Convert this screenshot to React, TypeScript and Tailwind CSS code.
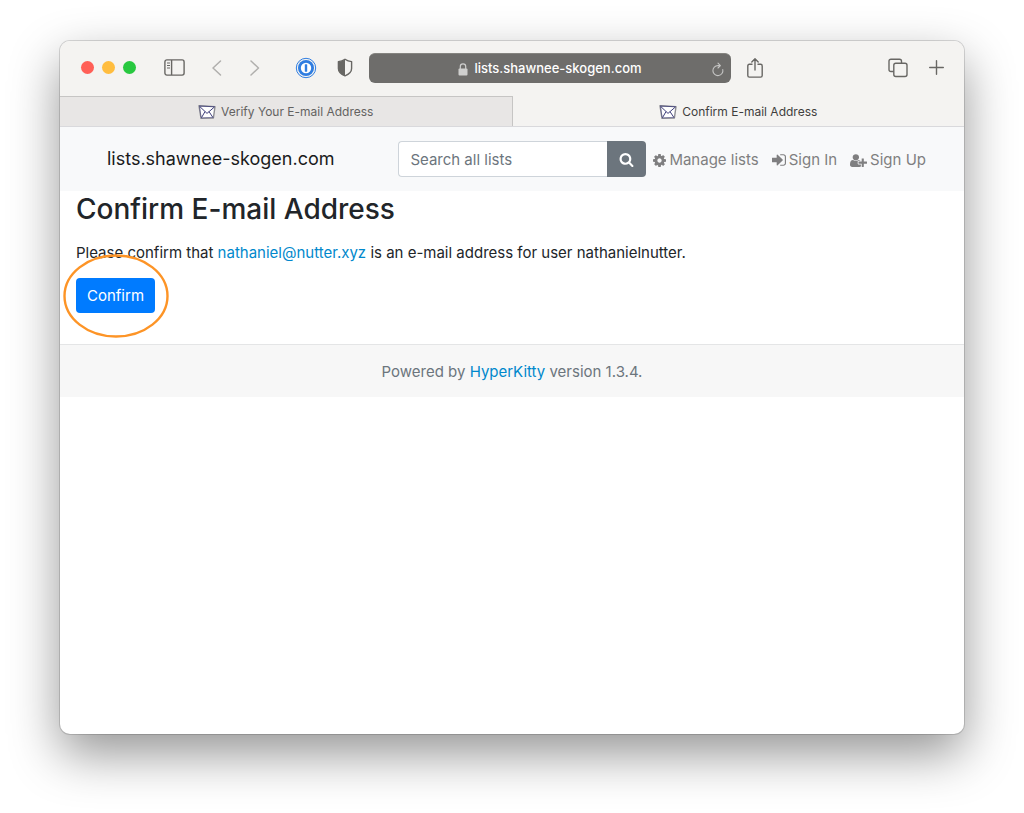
import type { ReactNode } from "react";

const glyphs = {
  cog: "M1152 896q0-106-75-181t-181-75-181 75-75 181 75 181 181 75 181-75 75-181zm512-109v222q0 12-8 23t-20 13l-185 28q-19 54-39 91 35 50 107 138 10 12 10 25t-9 23q-27 37-99 108t-94 71q-12 0-26-9l-138-108q-44 23-91 38-16 136-29 186-7 28-36 28h-222q-14 0-24.5-8.5t-11.5-21.5l-28-184q-49-16-90-37l-141 107q-10 9-25 9-14 0-25-11-126-114-165-168-7-10-7-23 0-12 8-23 15-21 51-66.5t54-70.5q-27-50-41-99l-183-27q-13-2-21-12.5t-8-23.5v-222q0-12 8-23t19-13l186-28q14-46 39-92-40-57-107-138-10-12-10-24 0-10 9-23 26-36 98.5-107.5t94.5-71.5q13 0 26 10l138 107q44-23 91-38 16-136 29-186 7-28 36-28h222q14 0 24.5 8.5t11.5 21.5l28 184q49 16 90 37l142-107q9-9 24-9 13 0 25 10 129 119 165 170 7 8 7 22 0 12-8 23-15 21-51 66.5t-54 70.5q26 50 41 98l183 28q13 2 21 12.5t8 23.5z",
  signIn:
    "M1184 896q0 26-19 45l-544 544q-19 19-45 19t-45-19-19-45v-288h-448q-26 0-45-19t-19-45v-384q0-26 19-45t45-19h448v-288q0-26 19-45t45-19 45 19l544 544q19 19 19 45zm352-352v704q0 119-84.5 203.5t-203.5 84.5h-320q-13 0-22.5-9.5t-9.5-22.5q-1-4-1-20t-.5-26.5 3-23.5 10-19.5 20.5-6.5h320q66 0 113-47t47-113v-704q0-66-47-113t-113-47h-312l-11.5-1-11.5-3-8-5.5-7-9-2-13.5q-1-4-1-20t-.5-26.5 3-23.5 10-19.5 20.5-6.5h320q119 0 203.5 84.5t84.5 203.5z",
  userPlus:
    "M704 896q-159 0-271.5-112.5t-112.5-271.5 112.5-271.5 271.5-112.5 271.5 112.5 112.5 271.5-112.5 271.5-271.5 112.5zm960 128h352q13 0 22.5 9.5t9.5 22.5v192q0 13-9.5 22.5t-22.5 9.5h-352v352q0 13-9.5 22.5t-22.5 9.5h-192q-13 0-22.5-9.5t-9.5-22.5v-352h-352q-13 0-22.5-9.5t-9.5-22.5v-192q0-13 9.5-22.5t22.5-9.5h352v-352q0-13 9.5-22.5t22.5-9.5h192q13 0 22.5 9.5t9.5 22.5v352zm-736 224q0 52 38 90t90 38h256v238q-68 50-171 50h-874q-121 0-194-69t-73-190q0-53 3.5-103.5t14-109 26.5-108.5 43-97.5 62-81 85.5-53.5 111.5-20q19 0 39 17 79 61 154.5 91.5t164.5 30.5 164.5-30.5 154.5-91.5q20-17 39-17 132 0 217 96h-223q-52 0-90 38t-38 90v192z",
  search:
    "M1216 832q0-185-131.5-316.5t-316.5-131.5-316.5 131.5-131.5 316.5 131.5 316.5 316.5 131.5 316.5-131.5 131.5-316.5zm512 832q0 52-38 90t-90 38q-54 0-90-38l-343-342q-179 124-399 124-143 0-273.5-55.5t-225-150-150-225-55.5-273.5 55.5-273.5 150-225 225-150 273.5-55.5 273.5 55.5 225 150 150 225 55.5 273.5q0 220-124 399l343 343q37 37 37 90z",
};

function Glyph({ d, viewBox, className }: { d: string; viewBox: string; className: string }) {
  return (
    <svg aria-hidden="true" viewBox={viewBox} fill="currentColor" className={className}>
      <path d={d} />
    </svg>
  );
}

function Envelope() {
  return (
    <svg aria-hidden="true" viewBox="0 0 18 16" className="h-4 w-[18px] shrink-0" fill="none">
      <path d="M1 1.8 17 2.6 15.4 14 3 14.4Z" fill="#fff" stroke="#8d8d93" strokeWidth="1.4" strokeLinejoin="round" />
      <path d="M1.4 2.2 9 9.4 16.4 3M3.4 13.8 7 7.6M15 13.6 11 7.6" stroke="#40407c" strokeWidth="1" />
      <path d="M1.4 2 16.6 2.8" stroke="#40407c" strokeWidth=".8" />
      <path d="M3 13.8 15 13.4M1.6 3 3 13" stroke="#40407c" strokeWidth=".5" />
    </svg>
  );
}

function ToolButton({ label, className, children }: { label: string; className: string; children: ReactNode }) {
  return (
    <button type="button" aria-label={label} className={`flex h-7 shrink-0 items-center justify-center ${className}`}>
      {children}
    </button>
  );
}

function Toolbar() {
  return (
    <div className="flex h-[55px] items-center pr-5 pb-0.5 pl-[21px] text-[#686764]">
      <div className="flex gap-2">
        <button type="button" aria-label="Close window" className="size-[13px] rounded-full bg-[#ff5f57]" />
        <button type="button" aria-label="Minimize window" className="size-[13px] rounded-full bg-[#ffbd3f]" />
        <button type="button" aria-label="Zoom window" className="size-[13px] rounded-full bg-[#28c840]" />
      </div>
      <ToolButton label="Show sidebar" className="ml-7 w-[21px]">
        <svg viewBox="0 0 21 17" className="h-[17px] w-[21px]" fill="none" stroke="currentColor">
          <rect x=".9" y=".9" width="19.2" height="15.2" rx="2" strokeWidth="1.4" />
          <path d="M7.6 1v15" strokeWidth="1.4" />
          <path d="M3 4h3M3 6.5h3M3 9h3" strokeWidth="1" />
        </svg>
      </ToolButton>
      <ToolButton label="Back" className="ml-6 w-4 text-[#b0afad]">
        <svg viewBox="0 0 16 16" className="size-4" fill="none" stroke="currentColor" strokeWidth="1.5" strokeLinecap="round" strokeLinejoin="round">
          <path d="M11.5 1 4 8l7.5 7" />
        </svg>
      </ToolButton>
      <ToolButton label="Forward" className="ml-[21px] w-4 text-[#b0afad]">
        <svg viewBox="0 0 16 16" className="size-4" fill="none" stroke="currentColor" strokeWidth="1.5" strokeLinecap="round" strokeLinejoin="round">
          <path d="M5 1l7.5 7L5 15" />
        </svg>
      </ToolButton>
      <ToolButton label="Passwords" className="ml-[33px] w-[22px]">
        <svg viewBox="0 0 22 22" className="size-[22px]" fill="none">
          <circle cx="11" cy="11" r="9.7" stroke="#2f7de1" strokeWidth="1" />
          <circle cx="11" cy="11" r="8" fill="#2f7de1" />
          <circle cx="11" cy="11" r="5.2" fill="#fff" />
          <rect x="9.8" y="7.2" width="2.4" height="7.6" rx=".6" fill="#2f7de1" />
        </svg>
      </ToolButton>
      <ToolButton label="Privacy report" className="ml-5 w-4">
        <svg viewBox="0 0 16 19" className="h-[19px] w-4" fill="none">
          <path d="M8 1.2C6 2.6 3.5 3.4 1.4 3.6v7C1.4 14 4.5 16.5 8 17.8c3.5-1.3 6.6-3.8 6.6-7.2v-7C12.5 3.4 10 2.6 8 1.2Z" stroke="currentColor" strokeWidth="1.4" strokeLinejoin="round" />
          <path d="M8 1.2C6 2.6 3.5 3.4 1.4 3.6v7C1.4 14 4.5 16.5 8 17.8Z" fill="currentColor" />
        </svg>
      </ToolButton>
      <div className="ml-4 flex h-[30px] min-w-0 flex-1 items-center rounded-md border-t border-[#858480] bg-[#6e6d6b] px-[7px] pt-0.5 text-white">
        <div className="flex min-w-0 flex-1 items-center justify-center gap-1.5 pl-3">
          <svg aria-hidden="true" viewBox="0 0 10 13" className="h-[13px] w-[10px]" fill="none">
            <rect x=".5" y="5.5" width="9" height="7" rx="1" fill="#cfcfce" />
            <path d="M2.3 6V3.6a2.7 2.7 0 0 1 5.4 0V6" stroke="#cfcfce" strokeWidth="1.2" />
          </svg>
          <span className="truncate text-[13px] font-medium">lists.shawnee-skogen.com</span>
        </div>
        <button type="button" aria-label="Reload page">
          <svg viewBox="0 0 12 15" className="h-[15px] w-3" fill="none" stroke="#c4c4c3" strokeWidth="1.1" strokeLinecap="round" strokeLinejoin="round">
            <path d="M10.8 7.6A5 5 0 1 1 6 3.6h2.2M6 1.2l2.4 2.4L6 6" />
          </svg>
        </button>
      </div>
      <ToolButton label="Share" className="ml-4 w-4">
        <svg viewBox="0 0 16 20" className="h-5 w-4" fill="none" stroke="currentColor" strokeWidth="1.4" strokeLinecap="round" strokeLinejoin="round">
          <path d="M5 6.3H2.4Q.8 6.3.8 7.9v9.6q0 1.6 1.6 1.6h11.2q1.6 0 1.6-1.6V7.9q0-1.6-1.6-1.6H11M8 12V1M4.8 4 8 .8 11.2 4" />
        </svg>
      </ToolButton>
      <ToolButton label="Show tab overview" className="ml-[125px] w-5">
        <svg viewBox="0 0 20 20" className="size-5" fill="none" stroke="currentColor" strokeWidth="1.4">
          <rect x="5.8" y="5.3" width="13.2" height="13.2" rx="2" />
          <path d="M5.8 13.5H3q-2 0-2-2V3.2q0-2 2-2h8.500q2 0 2 2v2.1" />
        </svg>
      </ToolButton>
      <ToolButton label="New tab" className="ml-[21px] w-[15px]">
        <svg viewBox="0 0 15 15" className="size-[15px]" fill="none" stroke="currentColor" strokeWidth="1.4" strokeLinecap="round">
          <path d="M7.5.7v13.600M.7 7.500h13.600" />
        </svg>
      </ToolButton>
    </div>
  );
}

function Tabs() {
  return (
    <div role="tablist" className="flex h-[31px] border-b border-[#d9d9dc] text-xs">
      <button type="button" role="tab" aria-selected="false" className="flex flex-1 items-center justify-center gap-[5px] border-t border-r border-[#c6c5c4] bg-[#e8e6e5] text-[#636261]">
        <Envelope />
        Verify Your E-mail Address
      </button>
      <button type="button" role="tab" aria-selected="true" className="flex flex-1 items-center justify-center gap-[5px] border-t border-transparent text-[#3f3e3d]">
        <Envelope />
        Confirm E-mail Address
      </button>
    </div>
  );
}

function SiteNav() {
  return (
    <nav className="flex h-16 items-center justify-between bg-[#f8f9fa] pr-[38px] pl-[47px] text-[15px]">
      <a href="#home" className="text-lg text-[#1a1b1c]">
        lists.shawnee-skogen.com
      </a>
      <div className="flex items-center">
        <form className="flex h-9" onSubmit={(e) => e.preventDefault()}>
          <input
            type="text"
            aria-label="Search all lists"
            placeholder="Search all lists"
            className="w-[209px] rounded-l border border-r-0 border-[#ced4da] bg-white px-[11px] pt-0.5 text-[#495057] placeholder:text-[#6c757d]"
          />
          <button type="submit" aria-label="Search" className="flex w-[39px] items-center justify-center rounded-r bg-[#6c757d] text-white">
            <Glyph d={glyphs.search} viewBox="0 0 1792 1792" className="size-[15px]" />
          </button>
        </form>
        <div className="flex gap-[13px] pt-0.5 pl-[7px] text-[#7f7f80]">
          <a href="#lists" className="flex items-center gap-[3px]">
            <Glyph d={glyphs.cog} viewBox="128 128 1536 1536" className="size-[13px]" />
            Manage lists
          </a>
          <a href="#sign-in" className="flex items-center gap-[3px]">
            <Glyph d={glyphs.signIn} viewBox="0 128 1536 1536" className="size-[14px]" />
            Sign In
          </a>
          <a href="#sign-up" className="flex items-center gap-[3px]">
            <Glyph d={glyphs.userPlus} viewBox="0 0 2048 1792" className="h-[15px] w-[17px]" />
            Sign Up
          </a>
        </div>
      </div>
    </nav>
  );
}

export default function App() {
  return (
    <div className="flex min-h-screen bg-white px-[60px] pt-[41px] pb-[79px] font-['Inter',sans-serif]">
      <div className="flex flex-1 flex-col overflow-hidden rounded-[10px] bg-white shadow-[0_0_0_1px_rgba(0,0,0,0.14),0_20px_50px_rgba(0,0,0,0.42)]">
        <header className="bg-[#f4f3f1]">
          <Toolbar />
          <Tabs />
        </header>
        <SiteNav />
        <main className="px-4 pb-[31px] text-[15px] text-[#212529]">
          <h1 className="text-[28px] leading-9 font-medium">Confirm E-mail Address</h1>
          <p className="mt-[15px] leading-[22px]">
            Please confirm that{" "}
            <a href="mailto:nathaniel@nutter.xyz" className="text-[#0088cc]">
              nathaniel@nutter.xyz
            </a>{" "}
            is an e-mail address for user nathanielnutter.
          </p>
          <div className="relative mt-[14px] w-fit">
            <button type="button" className="block h-[35px] rounded bg-[#007bff] px-[11px] pt-0.5 text-white">
              Confirm
            </button>
            <svg
              aria-hidden="true"
              viewBox="0 0 106 84"
              className="pointer-events-none absolute top-1/2 left-1/2 h-[84px] w-[106px] -translate-1/2"
              fill="none"
            >
              <ellipse cx="53" cy="42" rx="51.5" ry="40.5" stroke="#fd9426" strokeWidth="2.4" />
            </svg>
          </div>
        </main>
        <footer className="border-t border-[#e4e5e6] bg-[#f7f7f7] pt-4 pb-[14px] text-center text-[15px] leading-[22px] text-[#6c757d]">
          Powered by{" "}
          <a href="#hyperkitty" className="text-[#0088cc]">
            HyperKitty
          </a>{" "}
          version 1.3.4.
        </footer>
      </div>
    </div>
  );
}
